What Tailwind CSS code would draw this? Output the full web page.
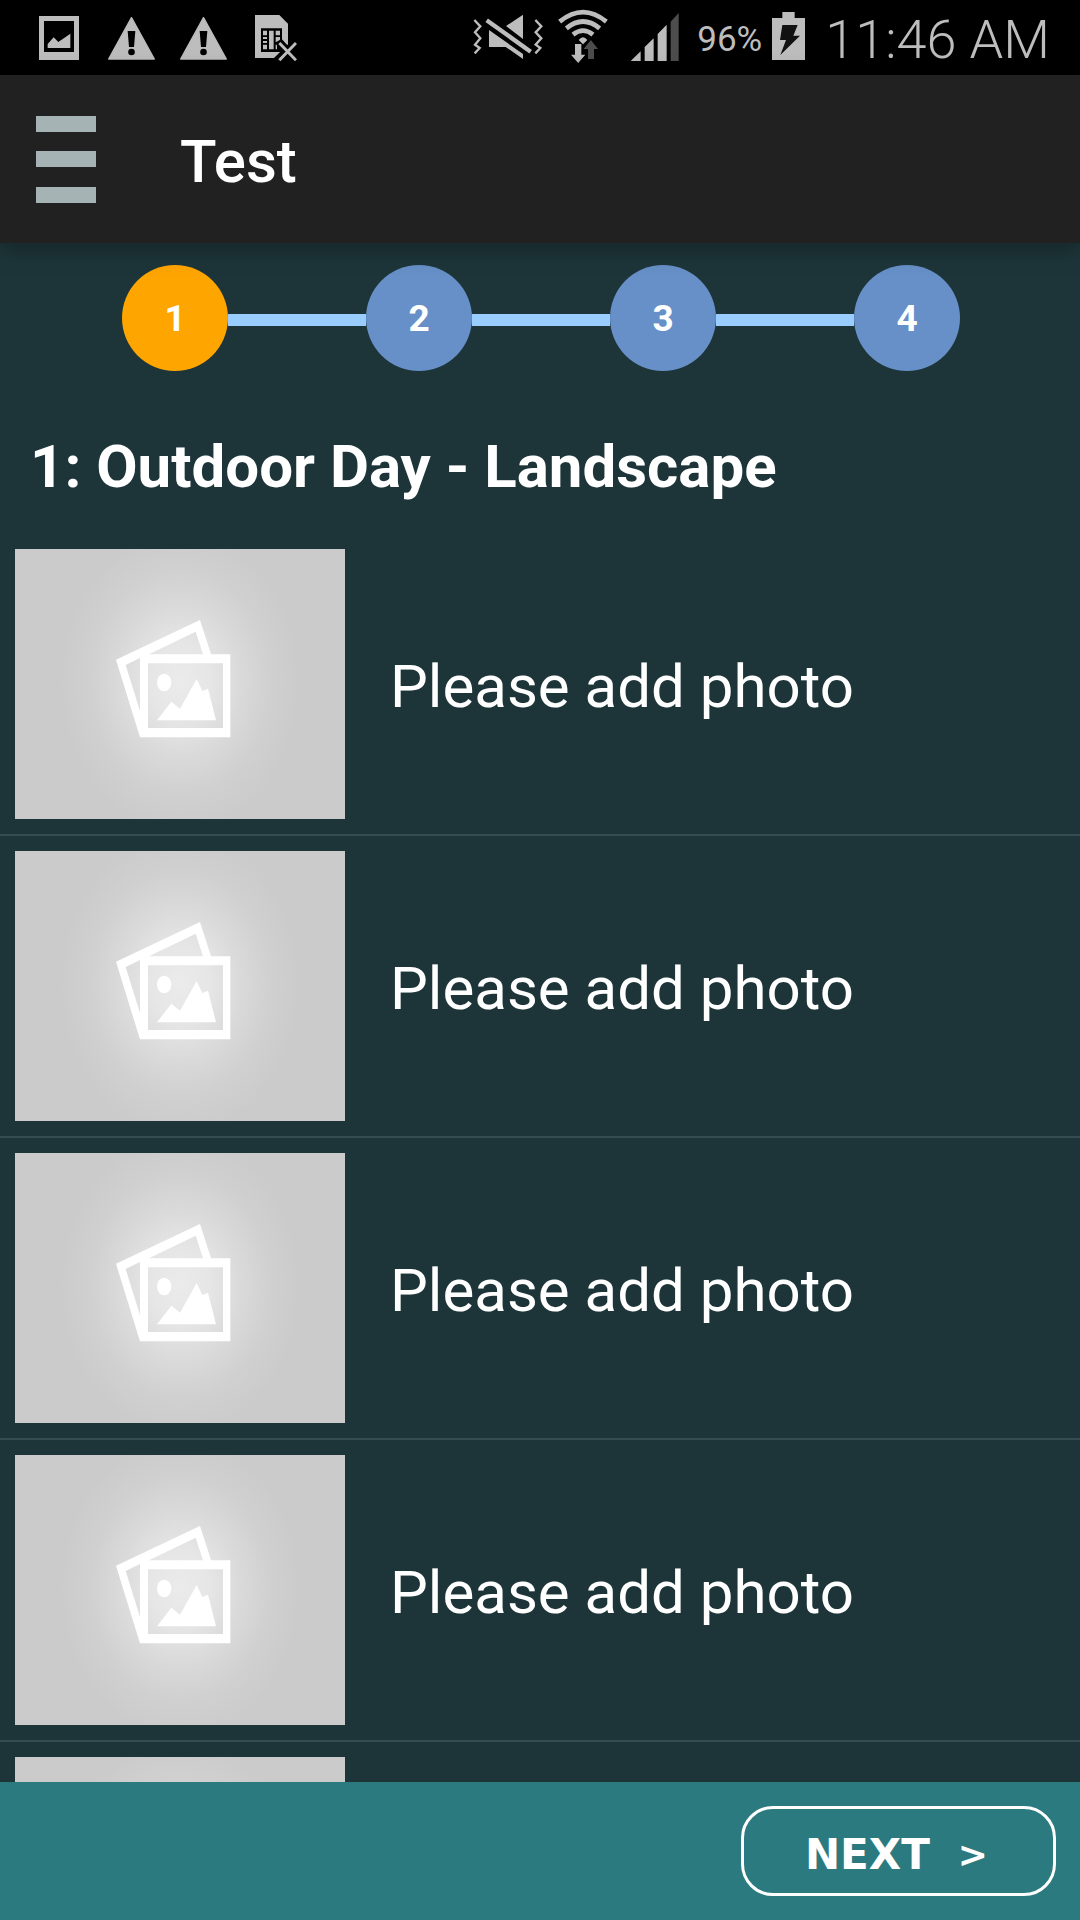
<!DOCTYPE html>
<html lang="en">
<head>
<meta charset="utf-8">
<meta name="viewport" content="width=device-width, initial-scale=1">
<title>Test</title>
<script src="https://cdn.jsdelivr.net/npm/@tailwindcss/browser@4"></script>
</head>
<body class="flex h-screen flex-col overflow-hidden bg-[#1d3539] font-['Roboto',sans-serif] text-white">

<!-- Shared placeholder picture -->
<svg class="absolute size-0" aria-hidden="true">
  <defs>
    <radialGradient id="glow" gradientUnits="userSpaceOnUse" cx="0" cy="0" r="1" gradientTransform="translate(540 425) scale(360 450)">
      <stop offset="0" stop-color="#ebebeb"/>
      <stop offset=".25" stop-color="#e6e6e6"/>
      <stop offset=".5" stop-color="#dadada"/>
      <stop offset=".75" stop-color="#d0d0d0"/>
      <stop offset="1" stop-color="#cbcbcb"/>
    </radialGradient>
    <symbol id="photo" viewBox="45 27 990 810">
      <rect x="45" y="27" width="990" height="810" fill="url(#glow)"/>
      <path fill="#fff" fill-rule="evenodd" d="M348 359 600 240 633 343H691V592H420ZM377 375 420 513V354ZM447 343H609L587 275ZM444 370V564H669V370Z"/>
      <ellipse cx="492.500" cy="427.500" rx="21.500" ry="26.500" fill="#fff"/>
      <path fill="#fff" d="M471 541 514 485 540 506 590 417 607 453 624 446 648 541Z"/>
    </symbol>
  </defs>
</svg>

<div class="flex h-[75px] shrink-0 items-center bg-black pr-[30px] pl-[39px] text-[#bdbdbd]">
  <div class="flex flex-1 items-center">
    <svg class="h-[75px] w-[40px]" viewBox="117 0 120 225" fill="currentColor"><path fill-rule="evenodd" d="M117 48H237V180H117ZM132 63V156H222V63Z"/><path d="M143 144V132L161 112 175 126 211 101V144Z"/></svg>
    <svg class="ml-[29px] h-[75px] w-[47px]" viewBox="324 0 141 225"><path fill="currentColor" stroke="currentColor" stroke-width="4" stroke-linejoin="round" d="M394.500 53 463 177H326Z"/><path d="M383 93H406L402 141H387Z"/><circle cx="394.500" cy="156" r="10"/></svg>
    <svg class="ml-[25px] h-[75px] w-[47px]" viewBox="324 0 141 225"><path fill="currentColor" stroke="currentColor" stroke-width="4" stroke-linejoin="round" d="M394.500 53 463 177H326Z"/><path d="M383 93H406L402 141H387Z"/><circle cx="394.500" cy="156" r="10"/></svg>
    <svg class="ml-[28px] h-[75px] w-[42px]" viewBox="765 0 126 225" fill="currentColor"><path d="M765 45H838L864 71V133L822 174H765Z"/><path fill="#000" d="M783 85H846V118L862 136V156H783Z"/><path d="M789 92H801V106H789ZM789 111H801V117H789ZM789 123H801V129H789ZM789 134H801V148H789ZM807 92H821V148H807ZM827 92H840V106H827ZM827 111H840V119L834 123 827 127ZM827 134H831V148H827Z"/><path fill="none" stroke="#000" stroke-width="22" d="M838 129 888 181M888 129 838 181"/><path fill="none" stroke="currentColor" stroke-width="9" d="M838 129 888 181M888 129 838 181"/></svg>
  </div>
  <svg class="h-[75px] w-[72px]" viewBox="36 0 216 225" fill="currentColor"><path fill="none" stroke="currentColor" stroke-width="7" d="M43 60 61 79 45 97 61 115 45 134 59 144 44 160M226 60 244 79 227 97 244 115 227 134 241 144 226 160"/><path d="M189 44V117L138 78ZM87 90 189 162V177L137 141H87Z"/><path fill="none" stroke="currentColor" stroke-width="13" d="M80 61 212 155"/></svg>
  <svg class="ml-[13px] h-[75px] w-[52px]" viewBox="291 0 156 225" fill="none" stroke="currentColor" stroke-width="14"><path d="M299 65Q369 8 439 65M319 85Q369 44 419 85M339 104Q369 80 399 104"/><path fill="currentColor" stroke="none" d="M356 120Q369 104 382 120L369 133Z"/><path stroke="none" fill="#000" d="M342 129H366V160H342ZM392 118 370 150H414Z"/><path fill="currentColor" stroke="none" d="M345 132H364V164H376L354.500 189 333 164H345Z"/><path fill="#4d4d4d" stroke="none" d="M392.500 120 414 147H402V177H384V147H371Z"/></svg>
  <svg class="ml-[21px] h-[75px] w-[50px]" viewBox="511 0 150 225" fill="currentColor"><path d="M513 183 543 154V183ZM555 141 582 115V183H555ZM594 102 621 74V183H594Z"/><path fill="#4d4d4d" d="M633 65 657 39V183H633Z"/></svg>
  <span class="ml-[17px] pt-[4px] text-[35px] leading-[42px]">96%</span>
  <svg class="ml-[10px] h-[75px] w-[33px]" viewBox="936 0 99 225" fill="currentColor"><path d="M936 54H967V36H1004V54H1035V180H936Z"/><path fill="#111" d="M967 75H1013L1000 107H1020L961 165 978 120H960Z"/></svg>
  <span class="ml-[20px] pt-[4px] text-[54px] leading-[64px] font-light">11:46 AM</span>
</div>

<header class="relative z-10 flex h-[168px] shrink-0 items-center bg-[#212121] pl-[36px] shadow-[0_4px_24px_rgba(0,0,0,0.35)]">
  <button type="button" aria-label="Menu" class="flex h-[87px] w-[60px] flex-col justify-between">
    <span class="h-[16px] w-full bg-[#a5b3b4]"></span>
    <span class="h-[16px] w-full bg-[#a5b3b4]"></span>
    <span class="h-[16px] w-full bg-[#a5b3b4]"></span>
  </button>
  <h1 class="ml-[84px] pt-[5px] text-[60px] leading-[72px] font-medium">Test</h1>
</header>

<main class="min-h-0 flex-1 overflow-hidden">
  <ol class="flex items-center pr-[120px] pl-[122px] pt-[22px] text-[37px] font-bold">
    <li class="flex size-[106px] items-center justify-center rounded-full bg-[#ffa500] pt-[2px]">1</li>
    <li aria-hidden="true" class="mt-[4px] h-[12px] flex-1 bg-[#99ccff]"></li>
    <li class="flex size-[106px] items-center justify-center rounded-full bg-[#6790c8] pt-[2px]">2</li>
    <li aria-hidden="true" class="mt-[4px] h-[12px] flex-1 bg-[#99ccff]"></li>
    <li class="flex size-[106px] items-center justify-center rounded-full bg-[#6790c8] pt-[2px]">3</li>
    <li aria-hidden="true" class="mt-[4px] h-[12px] flex-1 bg-[#99ccff]"></li>
    <li class="flex size-[106px] items-center justify-center rounded-full bg-[#6790c8] pt-[2px]">4</li>
  </ol>
  <h2 class="px-[30px] pt-[60px] pb-[31px] text-[60px] leading-[72px] font-bold">1: Outdoor Day - Landscape</h2>
  <ul class="divide-y-2 divide-[#374c50] text-[60px] leading-[72px]">
    <li class="flex items-center gap-[45px] p-[15px]"><svg class="h-[270px] w-[330px] shrink-0" role="img" aria-label="No photo"><use href="#photo"/></svg><span class="pt-[5px]">Please add photo</span></li>
    <li class="flex items-center gap-[45px] p-[15px]"><svg class="h-[270px] w-[330px] shrink-0" role="img" aria-label="No photo"><use href="#photo"/></svg><span class="pt-[5px]">Please add photo</span></li>
    <li class="flex items-center gap-[45px] p-[15px]"><svg class="h-[270px] w-[330px] shrink-0" role="img" aria-label="No photo"><use href="#photo"/></svg><span class="pt-[5px]">Please add photo</span></li>
    <li class="flex items-center gap-[45px] p-[15px]"><svg class="h-[270px] w-[330px] shrink-0" role="img" aria-label="No photo"><use href="#photo"/></svg><span class="pt-[5px]">Please add photo</span></li>
    <li class="flex items-center gap-[45px] p-[15px]"><svg class="h-[270px] w-[330px] shrink-0" role="img" aria-label="No photo"><use href="#photo"/></svg></li>
  </ul>
</main>

<footer class="flex h-[138px] shrink-0 items-center justify-end bg-[#2b7a80] px-[24px]">
  <button type="button" class="flex h-[90px] w-[315px] items-center justify-center gap-[28px] rounded-[32px] border-3 border-white pt-[8px] pr-[4px] font-['DejaVu_Sans',sans-serif] text-[42px] leading-[48px] font-bold text-white"><span>NEXT</span><span class="text-[36px]">&gt;</span></button>
</footer>
</body>
</html>
